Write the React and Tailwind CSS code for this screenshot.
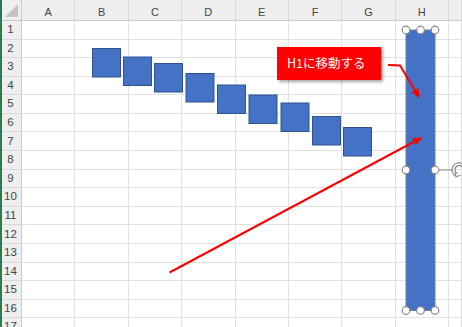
import React from "react";

const COLS = ["A", "B", "C", "D", "E", "F", "G", "H", ""];
const ROWS = Array.from({ length: 17 }, (_, i) => i + 1);

const squares = [
  [92.5, 48.5],
  [123.5, 57],
  [154.5, 63.5],
  [186, 73.5],
  [217.5, 85],
  [249, 95],
  [281, 103],
  [312.5, 116.5],
  [343.5, 127.5],
];

const handles = [
  [406, 30],
  [420.5, 30],
  [435, 30],
  [406, 170],
  [435, 170],
  [406, 310.5],
  [420.5, 310.5],
  [435, 310.5],
];

export default function App() {
  return (
    <div
      className="relative w-[462px] h-[327px] overflow-hidden bg-white"
      style={{ fontFamily: '"Liberation Sans", Arial, sans-serif' }}
    >
      <div className="grid grid-cols-[22px_repeat(8,53.375px)_1fr] grid-rows-[21px_repeat(17,18.58px)] w-full">
        {/* header row */}
        <div className="relative bg-[#efefef] border-r border-b border-[#c9c9c9]">
          <div className="absolute right-[3px] bottom-[3px] w-0 h-0 border-l-[13px] border-l-transparent border-b-[13px] border-b-[#c4c4c4]" />
        </div>
        {COLS.map((c, i) => (
          <div
            key={"h" + i}
            className="bg-[#efefef] border-r border-b border-r-[#d9d9d9] border-b-[#c9c9c9] flex items-center justify-center pt-[4px] text-[11px] text-[#444]"
          >
            {c}
          </div>
        ))}
        {ROWS.map((r) => (
          <React.Fragment key={r}>
            <div className="bg-[#efefef] border-r border-b border-r-[#c9c9c9] border-b-[#d9d9d9] flex items-center justify-center text-[11.5px] text-[#444]">
              {r}
            </div>
            {COLS.map((c, i) => (
              <div
                key={r + "-" + i}
                className="border-r border-b border-[#e1e1e1] bg-white"
              />
            ))}
          </React.Fragment>
        ))}
      </div>

      {/* window edge */}
      <div className="absolute left-0 top-0 w-[2px] h-full bg-[#2e7a4c]" />

      {/* drawing layer */}
      <svg
        className="absolute inset-0 pointer-events-none"
        width="462"
        height="327"
        viewBox="0 0 462 327"
      >
        <defs>
          <marker
            id="ah"
            markerUnits="userSpaceOnUse"
            markerWidth="10"
            markerHeight="10"
            refX="8"
            refY="4"
            orient="auto"
          >
            <path d="M0,0 L9,4 L0,8 Z" fill="#ff0000" />
          </marker>
        </defs>
        {squares.map(([x, y], i) => (
          <rect
            key={i}
            x={x}
            y={y}
            width="28"
            height="28.5"
            fill="#4472c4"
            stroke="#2f528f"
            strokeWidth="1"
          />
        ))}
        <rect
          x="406"
          y="30"
          width="29"
          height="280.5"
          fill="#4472c4"
          stroke="#6d7fa3"
          strokeWidth="1"
        />
        {/* rotation handle */}
        <line x1="439" y1="170" x2="453" y2="170" stroke="#8c8c8c" strokeWidth="1" />
        <g fill="none" stroke="#8c8c8c" strokeWidth="1.2">
          <path d="M455.5,176 A7,7 0 1 1 466,170" />
          <path d="M458,173.5 A4,4 0 1 1 463,170" />
          <path d="M455,172 L456,177 L460.5,175" />
        </g>
        {handles.map(([x, y], i) => (
          <circle
            key={i}
            cx={x}
            cy={y}
            r="3.8"
            fill="#ffffff"
            stroke="#8a8a8a"
            strokeWidth="1.2"
          />
        ))}
        {/* arrows */}
        <line
          x1="169.5"
          y1="272.5"
          x2="421"
          y2="138"
          stroke="#ff0000"
          strokeWidth="2"
          markerEnd="url(#ah)"
        />
        <polyline
          points="388,65 400,65.5 419,97"
          fill="none"
          stroke="#ff0000"
          strokeWidth="2"
          markerEnd="url(#ah)"
        />
      </svg>

      {/* callout */}
      <div
        className="absolute left-[277px] top-[47px] w-[104px] h-[33px] bg-[#ff0000] shadow-[2px_2px_3px_rgba(0,0,0,0.35)] flex items-center pl-[10px] text-white text-[12.5px]"
        style={{ fontFamily: '"Noto Sans CJK JP", "Noto Sans", sans-serif' }}
      >
        H1に移動する
      </div>
    </div>
  );
}
